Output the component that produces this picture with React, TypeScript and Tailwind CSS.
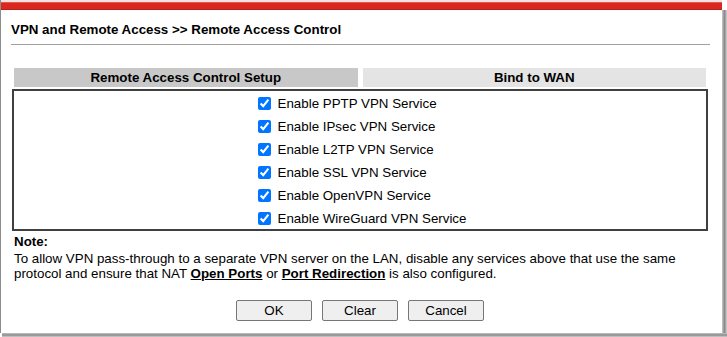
import React from "react";

const services = [
  "Enable PPTP VPN Service",
  "Enable IPsec VPN Service",
  "Enable L2TP VPN Service",
  "Enable SSL VPN Service",
  "Enable OpenVPN Service",
  "Enable WireGuard VPN Service",
];

export default function App() {
  return (
    <div
      className="w-[727px] h-[337px] bg-white flex flex-col overflow-hidden text-black"
      style={{ fontFamily: '"Liberation Sans", Arial, sans-serif' }}
    >
      <div className="flex flex-1 min-h-0">
        <div className="flex-1 flex flex-col border-l border-[#8c8c8c]">
          <div className="h-[2px] bg-[#f4e4e4]" />
          <div className="h-[8px] bg-[#d8281f] border-t border-[#e8574f] border-b border-b-[#b82019]" />
          <div className="pl-[10px] pr-[12px] pt-[12px]">
            <div className="text-[13.33px] font-bold leading-[16px] pb-[6px] border-b border-[#a0a0a0]">
              VPN and Remote Access &gt;&gt; Remote Access Control
            </div>
          </div>
          <div className="pl-[11px] pr-[14px] pt-[23px]">
            <div className="flex gap-[5px] px-[2px] pb-[2px]">
              <div className="flex-1 h-[19px] bg-[#c8c8c8] flex items-center justify-center text-[13.33px] font-bold">
                Remote Access Control Setup
              </div>
              <div className="flex-1 h-[19px] bg-[#e4e4e4] flex items-center justify-center text-[13.33px] font-bold">
                Bind to WAN
              </div>
            </div>
            <div className="border-2 border-[#404040] h-[142px] flex justify-center pt-[1px]">
              <div className="flex flex-col pl-[4px]">
                {services.map((s) => (
                  <label key={s} className="flex items-center h-[23px] shrink-0 text-[13.33px]">
                    <input
                      type="checkbox"
                      defaultChecked
                      className="w-[13px] h-[13px] m-0 mr-[7px] accent-[#0075ff]"
                    />
                    {s}
                  </label>
                ))}
              </div>
            </div>
            <div className="px-[2px] pt-[3px] text-[13.33px] leading-[15px]">
              <div className="font-bold">Note:</div>
              <div className="pt-[2px]">
                To allow VPN pass-through to a separate VPN server on the LAN, disable any services above that use the same
                <br />
                protocol and ensure that NAT{" "}
                <span className="font-bold underline">Open Ports</span> or{" "}
                <span className="font-bold underline">Port Redirection</span> is also configured.
              </div>
            </div>
            <div className="flex justify-center gap-[10px] pt-[19px]">
              {["OK", "Clear", "Cancel"].map((b) => (
                <button
                  key={b}
                  className="w-[76px] h-[21px] bg-[#efefef] border border-[#767676] rounded-[2px] text-[13.33px] leading-none"
                >
                  {b}
                </button>
              ))}
            </div>
          </div>
        </div>
        <div className="w-[5px] flex flex-col">
          <div className="h-[10px] bg-white" />
          <div className="flex-1 bg-gradient-to-r from-[#c8c8c8] via-[#8a8a8a] to-[#d0d0d0]" />
        </div>
      </div>
      <div className="h-[4px] flex">
        <div className="w-[2px] bg-white" />
        <div className="flex-1 bg-gradient-to-b from-[#c8c8c8] via-[#8a8a8a] to-[#d0d0d0]" />
      </div>
    </div>
  );
}
